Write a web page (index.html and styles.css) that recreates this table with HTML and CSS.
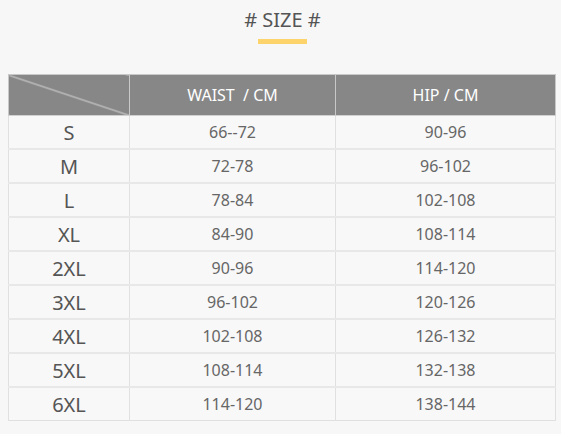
FILE: index.html
```html
<!DOCTYPE html>
<html>
<head>
<meta charset="utf-8">
<link rel="stylesheet" href="styles.css">
</head>
<body>
<div class="page">
  <div class="title">
    <h1 class="title-text"># SIZE #</h1>
    <div class="title-bar"></div>
  </div>
  <table class="size-table">
    <colgroup>
      <col class="c1"><col class="c2"><col class="c3">
    </colgroup>
    <thead>
      <tr>
        <th class="diag"></th>
        <th>WAIST &nbsp;/ CM</th>
        <th>HIP / CM</th>
      </tr>
    </thead>
    <tbody>
      <tr><td class="size">S</td><td>66--72</td><td>90-96</td></tr>
      <tr><td class="size">M</td><td>72-78</td><td>96-102</td></tr>
      <tr><td class="size">L</td><td>78-84</td><td>102-108</td></tr>
      <tr><td class="size">XL</td><td>84-90</td><td>108-114</td></tr>
      <tr><td class="size">2XL</td><td>90-96</td><td>114-120</td></tr>
      <tr><td class="size">3XL</td><td>96-102</td><td>120-126</td></tr>
      <tr><td class="size">4XL</td><td>102-108</td><td>126-132</td></tr>
      <tr><td class="size">5XL</td><td>108-114</td><td>132-138</td></tr>
      <tr><td class="size">6XL</td><td>114-120</td><td>138-144</td></tr>
    </tbody>
  </table>
</div>
</body>
</html>
```

FILE: styles.css
```css
html, body {
  margin: 0;
  padding: 0;
  background: #f7f7f7;
}
body {
  font-family: "Noto Sans", "Open Sans", sans-serif;
}
.page {
  width: 561px;
  height: 434px;
  padding: 0 6px 0 8px;
  box-sizing: border-box;
}
.title {
  display: flex;
  flex-direction: column;
  align-items: center;
  padding-top: 5px;
  padding-left: 2px;
}
.title-text {
  margin: 0;
  font-size: 20px;
  font-weight: 400;
  line-height: 30px;
  color: #555;
}
.title-bar {
  width: 49px;
  height: 5px;
  background: #fdd36b;
  margin-top: 4px;
}
.size-table {
  margin-top: 30px;
  width: 547px;
  border-collapse: collapse;
  table-layout: fixed;
  background: #f8f8f8;
}
.c1 { width: 121px; }
.c2 { width: 206px; }
.c3 { width: 220px; }
.size-table th {
  height: 40px;
  padding: 0;
  background: #878787;
  color: #fff;
  font-size: 16px;
  font-weight: 400;
  border: 1px solid #c8c8c8;
  border-bottom: 1px solid #d0d0d0;
}
.size-table th.diag {
  background: linear-gradient(to top right, #878787 calc(50% - 1px), #d4d4d4 50%, #878787 calc(50% + 1px));
}
.size-table td {
  height: 32px;
  padding: 0;
  text-align: center;
  font-size: 16px;
  color: #666;
  border-left: 1px solid #e0e0e0;
  border-right: 1px solid #e0e0e0;
  border-bottom: 2px solid #e8e8e8;
}
.size-table tbody tr:last-child td {
  border-bottom: 1px solid #e0e0e0;
}
.size-table td.size {
  font-size: 20px;
  color: #555;
}
```
